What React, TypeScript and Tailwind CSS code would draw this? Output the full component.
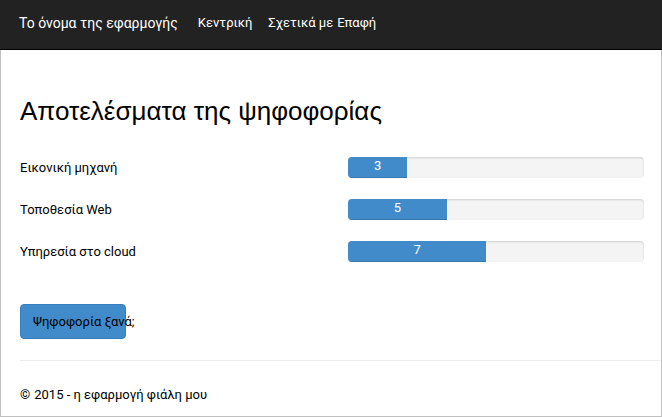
type Result = { id: string; label: string; votes: number };

const results: Result[] = [
  { id: "vm", label: "Εικονική μηχανή", votes: 3 },
  { id: "web", label: "Τοποθεσία Web", votes: 5 },
  { id: "cloud", label: "Υπηρεσία στο cloud", votes: 7 },
];

const totalVotes = results.reduce((sum, r) => sum + r.votes, 0);

function NavBar() {
  return (
    <header className="flex h-[50px] items-center border-b border-black bg-[#222222] pb-1 pl-[19px] text-white">
      <a href="#" className="mr-5 text-[14px] leading-5">
        Το όνομα της εφαρμογής
      </a>
      <nav className="flex pt-px text-[13px] leading-5">
        <a href="#home" className="mr-4">Κεντρική</a>
        <a href="#about" className="mr-1">Σχετικά με</a>
        <a href="#contact">Επαφή</a>
      </nav>
    </header>
  );
}

function ResultRow({ id, label, votes }: Result) {
  return (
    <li className="grid grid-cols-2 items-center gap-8">
      <span id={id} className="text-[13px] leading-5">{label}</span>
      <div
        role="progressbar"
        aria-labelledby={id}
        aria-valuenow={votes}
        aria-valuemin={0}
        aria-valuemax={totalVotes}
        className="h-[21px] overflow-hidden rounded bg-[#f4f4f4] shadow-[inset_0_1px_2px_rgba(0,0,0,0.15)]"
      >
        <div
          className="h-full bg-[#428bca] text-center text-[13px] leading-[18px] text-white shadow-[inset_0_-1px_0_rgba(0,0,0,0.15)]"
          style={{ width: `${(votes / totalVotes) * 100}%` }}
        >
          {votes}
        </div>
      </div>
    </li>
  );
}

export default function App() {
  return (
    <div className="flex min-h-screen flex-col bg-white font-['Roboto','Liberation_Sans',sans-serif] text-black">
      <NavBar />
      <div className="flex-1 border-x border-b border-[#c0c0c0] pl-[19px]">
        <main className="pt-[45px] pr-[17px]">
          <h1 className="font-['Liberation_Sans',Arial,sans-serif] text-[26px] leading-8">
            Αποτελέσματα της ψηφοφορίας
          </h1>
          <ul className="mt-[30px] flex flex-col gap-[21px]">
            {results.map((r) => (
              <ResultRow key={r.id} {...r} />
            ))}
          </ul>
          <button
            type="button"
            className="mt-[42px] block h-[35px] w-[106px] rounded border border-[#357ebd] bg-[#428bca] px-3 pt-px text-left text-[13px] leading-5 whitespace-nowrap"
          >
            Ψηφοφορία ξανά;
          </button>
        </main>
        <footer className="mt-[21px] flex items-center gap-1 border-t border-[#eeeeee] pt-6 text-[13px] leading-5">
          <span>©</span>
          <span>2015 - η εφαρμογή φιάλη μου</span>
        </footer>
      </div>
    </div>
  );
}
